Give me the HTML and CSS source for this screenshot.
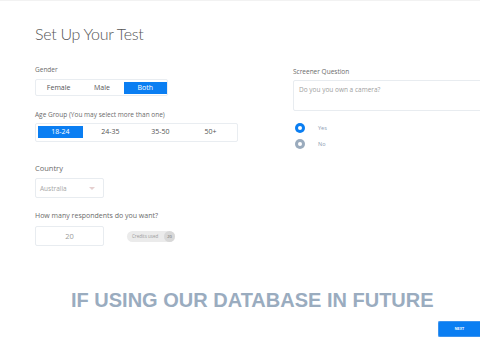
FILE: index.html
```html
<!DOCTYPE html>
<html lang="en">

<head>
    <meta charset="UTF-8">
    <meta name="viewport" content="width=device-width, initial-scale=1.0">
    <title>Set Up Your Test</title>
    <link rel="stylesheet" href="styles.css">
</head>

<body>
    <div class="content">
        <div class="col-left">
            <h1 class="title">Set Up Your Test</h1>

            <div class="label gender-label">Gender</div>
            <div class="toggle gender">
                <span class="opt">Female</span>
                <span class="opt">Male</span>
                <span class="opt active">Both</span>
            </div>

            <div class="label age-label">Age Group (You may select more than one)</div>
            <div class="toggle age">
                <span class="opt active">18-24</span>
                <span class="opt">24-35</span>
                <span class="opt">35-50</span>
                <span class="opt">50+</span>
            </div>

            <div class="label big country-label">Country</div>
            <div class="select">
                <span>Australia</span>
                <span class="caret"></span>
            </div>

            <div class="label big resp-label">How many respondents do you want?</div>
            <div class="resp-row">
                <div class="number">20</div>
                <div class="credits">
                    <span class="credits-text">Credits used</span>
                    <span class="credits-num">20</span>
                </div>
            </div>
        </div>

        <div class="col-right">
            <div class="label screener-label">Screener Question</div>
            <div class="textarea">Do you you own a camera?</div>
            <div class="radio-row first">
                <span class="radio checked"></span>
                <span class="radio-text">Yes</span>
            </div>
            <div class="radio-row">
                <span class="radio"></span>
                <span class="radio-text">No</span>
            </div>
        </div>
    </div>

    <div class="banner">IF USING OUR DATABASE IN FUTURE</div>

    <div class="footer">
        <button class="next">NEXT</button>
    </div>
</body>

</html>
```

FILE: styles.css
```css
body {
    margin: 0;
    width: 480px;
    height: 360px;
    overflow: hidden;
    background: #fff;
    border-top: 1px solid #f2f2f2;
    box-sizing: border-box;
    font-family: "Open Sans", "Noto Sans", sans-serif;
    color: #666;
}

.content {
    display: flex;
    padding: 23px 0 0 35px;
}

.col-left {
    width: 258px;
    flex-shrink: 0;
}

.col-right {
    flex: 1;
}

.title {
    margin: 0;
    font-family: "Lato", sans-serif;
    font-size: 16px;
    line-height: 20px;
    font-weight: 300;
    letter-spacing: -0.3px;
    color: #555;
}

.label {
    font-size: 6.5px;
    line-height: 10px;
    color: #6b6b6b;
}

.label.big {
    font-size: 7.5px;
}

.gender-label {
    margin-top: 21px;
}

.age-label {
    margin-top: 14px;
}

.country-label {
    margin-top: 21px;
}

.resp-label {
    margin-top: 13px;
    font-size: 7px !important;
}

.toggle {
    display: flex;
    gap: 0;
    margin-top: 4px;
    padding: 2px 0 2px 1px;
    border: 1px solid #e9edf1;
    border-radius: 2px;
    box-sizing: border-box;
}

.toggle .opt {
    height: 12px;
    line-height: 12px;
    text-align: center;
    font-size: 7px;
    color: #555;
}

.toggle .opt.active {
    background: #0a7ef2;
    color: #fff;
}

.gender {
    width: 133px;
    height: 17px;
}

.gender .opt {
    width: 44px;
}

.age {
    width: 203px;
    height: 19px;
    margin-top: 3px;
    padding: 2px;
    gap: 5px;
}

.age .opt {
    width: 45px;
}

.select {
    display: flex;
    align-items: center;
    justify-content: space-between;
    width: 69px;
    height: 20px;
    margin-top: 5px;
    padding: 0 8px 0 4px;
    border: 1px solid #e8ecf0;
    border-radius: 2px;
    box-sizing: border-box;
    font-size: 6.5px;
    color: #a5a5a5;
}

.caret {
    width: 0;
    height: 0;
    border-left: 3px solid transparent;
    border-right: 3px solid transparent;
    border-top: 3px solid #e5cfcf;
}

.resp-row {
    display: flex;
    align-items: center;
    gap: 23px;
    margin-top: 5px;
}

.number {
    width: 69px;
    height: 20px;
    line-height: 18px;
    text-align: center;
    border: 1px solid #e8ecf0;
    border-radius: 2px;
    box-sizing: border-box;
    font-size: 7.5px;
    color: #9a9a9a;
}

.credits {
    display: flex;
    align-items: center;
    justify-content: space-between;
    width: 48px;
    height: 11px;
    padding-left: 5px;
    border-radius: 6px;
    background: #ebebeb;
    box-sizing: border-box;
}

.credits-text {
    font-size: 4.5px;
    color: #999;
}

.credits-num {
    width: 11px;
    height: 11px;
    line-height: 11px;
    border-radius: 50%;
    background: #d8d8d8;
    text-align: center;
    font-size: 4px;
    color: #666;
}

.screener-label {
    margin-top: 43px;
}

.textarea {
    height: 31px;
    margin-top: 3px;
    margin-right: -10px;
    padding: 4px 5px;
    border: 1px solid #e8ecf0;
    border-radius: 2px;
    box-sizing: border-box;
    font-size: 6.5px;
    line-height: 9px;
    color: #a0a0a0;
}

.radio-row {
    display: flex;
    align-items: center;
    gap: 13px;
    margin-top: 6px;
    padding-left: 2px;
    height: 10px;
}

.radio-row.first {
    margin-top: 12px;
}

.radio {
    width: 10px;
    height: 10px;
    border-radius: 50%;
    background: #9aabbd;
    position: relative;
}

.radio::after {
    content: "";
    position: absolute;
    left: 3px;
    top: 3px;
    width: 4px;
    height: 4px;
    border-radius: 50%;
    background: #fff;
}

.radio.checked {
    background: #0a7ef2;
}

.radio-text {
    font-size: 5.5px;
    color: #8c9db2;
}

.banner {
    margin-top: 42px;
    padding-left: 71px;
    font-family: "Liberation Sans", Arial, sans-serif;
    font-weight: 700;
    font-size: 20px;
    line-height: 24px;
    color: #9aacbf;
    white-space: nowrap;
}

.footer {
    display: flex;
    justify-content: flex-end;
    margin-top: 9px;
}

.next {
    width: 42px;
    height: 16px;
    padding: 0;
    border: 1px solid #3b93ef;
    border-right: none;
    border-radius: 2px 0 0 2px;
    background: #0a7ef2;
    color: #fff;
    font-family: "Liberation Sans", Arial, sans-serif;
    font-size: 3.5px;
    font-weight: 700;
}
```
